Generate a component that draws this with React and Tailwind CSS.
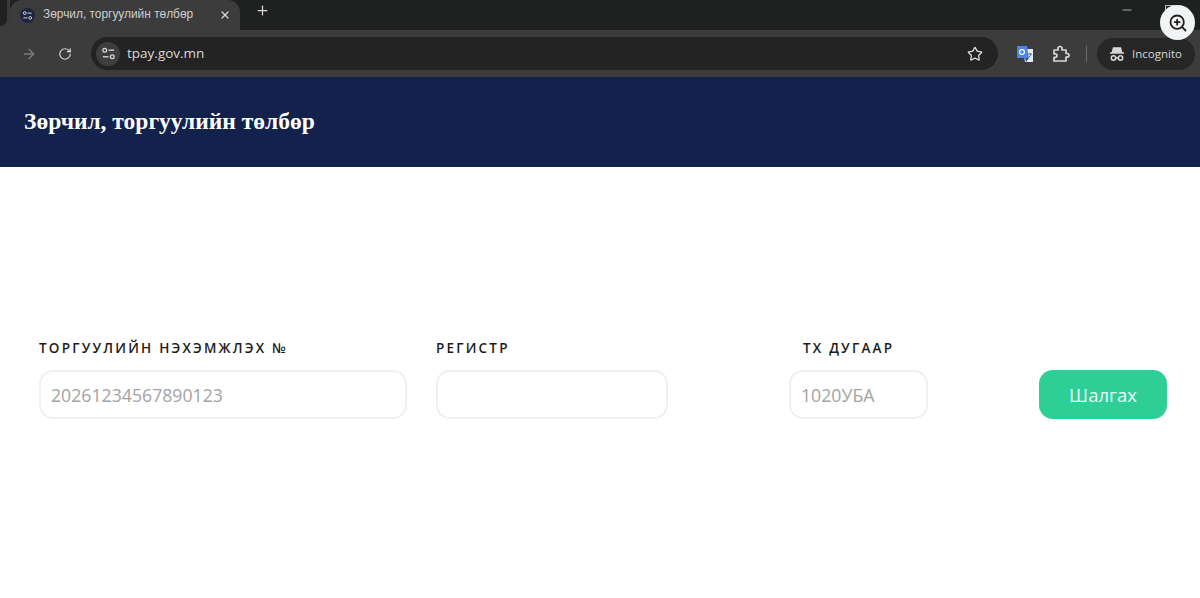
import { ArrowRight, RotateCw, Star, X, Plus, Minus, ZoomIn } from 'lucide-react'

const sans = "font-['Open_Sans','Noto_Sans',sans-serif]"

function TuneIcon({ size = 16 }) {
  return (
    <svg width={size} height={size} viewBox="0 0 16 16" fill="none" stroke="currentColor" strokeWidth="1.4">
      <circle cx="4" cy="4.5" r="2" />
      <path d="M8 4.5h6" />
      <circle cx="12" cy="11.5" r="2" />
      <path d="M2 11.5h6" />
    </svg>
  )
}

function TranslateIcon() {
  return (
    <svg width="18" height="18" viewBox="0 0 18 18">
      <path d="M7 4h10v13H9z" fill="#e8eaed" />
      <path d="M1 1h10l2 12H1z" fill="#4a86e8" />
      <path d="M9 13h4l-3 4z" fill="#2a56a8" />
      <circle cx="6" cy="7" r="2.4" fill="none" stroke="#fff" strokeWidth="1.2" />
      <path d="M12 9h4M14 8v1M12.5 13l3-4" stroke="#4a6fa8" strokeWidth="1" fill="none" />
    </svg>
  )
}

function ExtensionIcon() {
  return (
    <svg width="18" height="18" viewBox="0 0 18 18" fill="none" stroke="currentColor" strokeWidth="1.7" strokeLinejoin="round">
      <path d="M2 5h4V3.5a2 2 0 0 1 4 0V5h4v3.5h1.2a1.8 1.8 0 0 1 0 3.6H14V16H2v-3.6h1.2a1.8 1.8 0 0 0 0-3.6H2z" />
    </svg>
  )
}

function IncognitoIcon() {
  return (
    <svg width="16" height="16" viewBox="0 0 16 16" fill="none" stroke="currentColor" strokeWidth="1.5">
      <path d="M4.5 2h7l1 4h-9z" fill="currentColor" />
      <path d="M1 7h14" />
      <circle cx="4.5" cy="12" r="2.2" />
      <circle cx="11.5" cy="12" r="2.2" />
      <path d="M6.7 12h2.6" />
    </svg>
  )
}

function BrowserBar() {
  return (
    <div className={`${sans} text-[#d8d8d8]`}>
      <div className="flex h-[30px] bg-[#1f2020]">
        <div className="w-[10px] bg-[#3a3a3a]">
          <div className="h-[26px] w-[7px] rounded-br-lg bg-[#1f2020]" />
        </div>
        <div className="flex w-[230px] items-center rounded-t-xl bg-[#3c3c3c] pl-[10px] pr-[9px]">
          <div className="flex h-[15px] w-[15px] items-center justify-center rounded-full bg-[#1f2440] text-[#d8d8d8]">
            <TuneIcon size={11} />
          </div>
          <span className="ml-[8px] text-[11.9px] text-[#cfcfcf] font-['Liberation_Sans',sans-serif] whitespace-nowrap">Зөрчил, торгуулийн төлбөр</span>
          <X size={12} strokeWidth={2.5} className="ml-auto" />
        </div>
        <Plus size={15} className="ml-[15px] mt-[3px]" strokeWidth={2} />
        <Minus size={14} className="ml-[850px] mt-[3px] text-[#bdbdbd]" strokeWidth={1.5} />
        <div className="ml-[31px] mt-[5px] h-[10px] w-[10px] border border-[#bdbdbd]" />
      </div>
      <div className="flex h-[47px] items-center bg-[#3c3c3c]">
        <ArrowRight size={16} className="ml-[21px] text-[#7d7d7d]" />
        <RotateCw size={14} className="ml-[21px]" strokeWidth={2} />
        <div className="ml-[19px] flex h-[33px] w-[907px] items-center rounded-full bg-[#232323] pl-[5px] pr-[15px]">
          <div className="flex h-[24px] w-[24px] items-center justify-center rounded-full bg-[#3e3e3e]">
            <TuneIcon size={15} />
          </div>
          <span className="ml-[7px] text-[13.5px]">tpay.gov.mn</span>
          <Star size={16} strokeWidth={2} className="ml-auto" />
        </div>
        <div className="ml-[18px]"><TranslateIcon /></div>
        <div className="ml-[18px]"><ExtensionIcon /></div>
        <div className="ml-[16px] h-[16px] w-px bg-[#6a6a6a]" />
        <div className="ml-[10px] flex h-[32px] w-[98px] items-center rounded-full bg-[#262626] pl-[12px]">
          <IncognitoIcon />
          <span className="ml-[7px] text-[11.5px]">Incognito</span>
        </div>
      </div>
    </div>
  )
}

export default function App() {
  const labelCls = "h-[23px] text-[13.5px] leading-[23px] font-semibold tracking-[2.2px] text-[#1c1c1c] whitespace-nowrap"
  const inputCls = "mt-[10px] h-[49px] rounded-[14px] border-2 border-[#f0f0f0] bg-white px-[10px] text-[17.7px] text-[#a3a3a3] outline-none placeholder:text-[#a3a3a3]"

  return (
    <div className="relative h-[598px] w-[1200px] overflow-hidden bg-white">
      <BrowserBar />

      <header className="flex h-[90px] items-center bg-[#13224c] pl-[24px]">
        <h1 className="font-['Liberation_Serif',serif] text-[23.5px] font-bold text-white">Зөрчил, торгуулийн төлбөр</h1>
      </header>

      <form className={`${sans} flex items-start pl-[39px] pt-[170px]`}>
        <div className="w-[368px]">
          <div className={labelCls}>ТОРГУУЛИЙН НЭХЭМЖЛЭХ №</div>
          <input className={`${inputCls} w-full`} placeholder="20261234567890123" />
        </div>
        <div className="ml-[29px] w-[232px]">
          <div className={labelCls}>РЕГИСТР</div>
          <input className={`${inputCls} w-full`} />
        </div>
        <div className="ml-[121px] w-[139px]">
          <div className={`${labelCls} pl-[14px]`}>ТХ ДУГААР</div>
          <input className={`${inputCls} w-full`} placeholder="1020УБА" />
        </div>
        <button type="button" className="ml-[111px] mt-[33px] h-[49px] w-[128px] rounded-[14px] bg-[#2dcf96] text-[18.5px] text-[#ecfff7]">
          Шалгах
        </button>
      </form>

      <div className="absolute left-[1160px] top-[5px] flex h-[35px] w-[35px] items-center justify-center rounded-full bg-[#f1f3f4] text-[#222]">
        <ZoomIn size={20} strokeWidth={2.2} />
      </div>
    </div>
  )
}
